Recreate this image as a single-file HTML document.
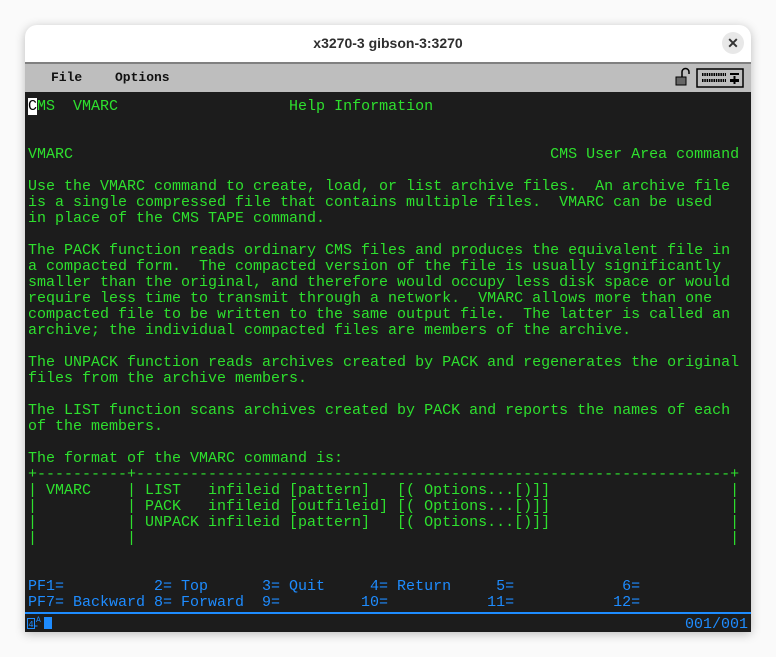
<!DOCTYPE html>
<html><head><meta charset="utf-8"><style>
html,body{margin:0;padding:0;background:#fafafa;width:776px;height:657px;overflow:hidden}
.win{position:absolute;left:25px;top:25px;width:726px;height:607px;border-radius:12px 12px 0 0;background:#fff;box-shadow:0 2px 10px rgba(0,0,0,.25);overflow:hidden}
.title{position:absolute;left:0;top:0;width:726px;height:37px;text-align:center;font:bold 14px "Liberation Sans",sans-serif;line-height:37px;color:#2e2e2e}
.close{position:absolute;left:697px;top:7px;width:22px;height:22px;border-radius:50%;background:#e8e8e8;text-align:center;font:bold 14px/22px "Liberation Sans",sans-serif;color:#333}
.menu{position:absolute;left:0;top:37px;width:726px;height:30px;background:#bebebe;border-top:2px solid #808080;box-sizing:border-box}
.menu span{position:absolute;top:6px;font:bold 13px "Liberation Mono",monospace;color:#111}
.term{position:absolute;left:0;top:67px;width:726px;height:540px;background:#1c1c1c}
pre{position:absolute;left:3px;top:7px;margin:0;font:15px/16px "Liberation Mono",monospace;color:#2ee02e}
.b{color:#1e8cff}
.cur{background:#fff;color:#000}
.line{position:absolute;left:0;top:520px;width:726px;height:2px;background:#1e8cff}
.st{position:absolute;left:660px;top:525px;font:15px/16px "Liberation Mono",monospace;color:#1e8cff}
</style></head><body>
<div class="win">
<div class="title">x3270-3 gibson-3:3270</div>
<div class="close">✕</div>
<div class="menu"><span style="left:26px">File</span><span style="left:90px">Options</span>
<svg style="position:absolute;left:650px;top:3px" width="70" height="22">
<rect x="1" y="10" width="10" height="8" fill="#666" stroke="#000"/><path d="M7 10V5a3 3 0 0 1 7 0v2" fill="none" stroke="#000" stroke-width="1.5"/>
<rect x="22" y="2" width="46" height="18" fill="none" stroke="#000" stroke-width="1.5"/>
<path d="M27 7.5h24M27 13.5h24" stroke="#000" stroke-width="3" stroke-dasharray="1.5 0.8"/>
<rect x="55" y="6" width="9" height="2" fill="#000"/><rect x="55" y="12" width="9" height="3" fill="#000"/><rect x="58.5" y="9" width="2" height="8" fill="#000"/>
</svg></div>
<div class="term">
<pre><span class="cur">C</span>MS  VMARC                   Help Information


VMARC                                                     CMS User Area command

Use the VMARC command to create, load, or list archive files.  An archive file
is a single compressed file that contains multiple files.  VMARC can be used
in place of the CMS TAPE command.

The PACK function reads ordinary CMS files and produces the equivalent file in
a compacted form.  The compacted version of the file is usually significantly
smaller than the original, and therefore would occupy less disk space or would
require less time to transmit through a network.  VMARC allows more than one
compacted file to be written to the same output file.  The latter is called an
archive; the individual compacted files are members of the archive.

The UNPACK function reads archives created by PACK and regenerates the original
files from the archive members.

The LIST function scans archives created by PACK and reports the names of each
of the members.

The format of the VMARC command is:
+----------+------------------------------------------------------------------+
| VMARC    | LIST   infileid [pattern]   [( Options...[)]]                    |
|          | PACK   infileid [outfileid] [( Options...[)]]                    |
|          | UNPACK infileid [pattern]   [( Options...[)]]                    |
|          |                                                                  |


<span class="b">PF1=          2= Top      3= Quit     4= Return     5=            6=
PF7= Backward 8= Forward  9=         10=           11=           12=</span></pre>
<div class="line"></div>
<svg style="position:absolute;left:2px;top:523px" width="30" height="15"><rect x="0.5" y="3.5" width="7" height="10" fill="none" stroke="#1e8cff"/><text x="1.3" y="12" font-size="9" fill="#1e8cff" font-family="Liberation Mono">4</text><path d="M7.5 11h3" stroke="#1e8cff"/><text x="9" y="7" font-size="8" fill="#1e8cff" font-family="Liberation Mono">A</text><rect x="17" y="2" width="8" height="12" fill="#1e8cff"/></svg>
<div class="st">001/001</div>
</div>
</div>
</body></html>
